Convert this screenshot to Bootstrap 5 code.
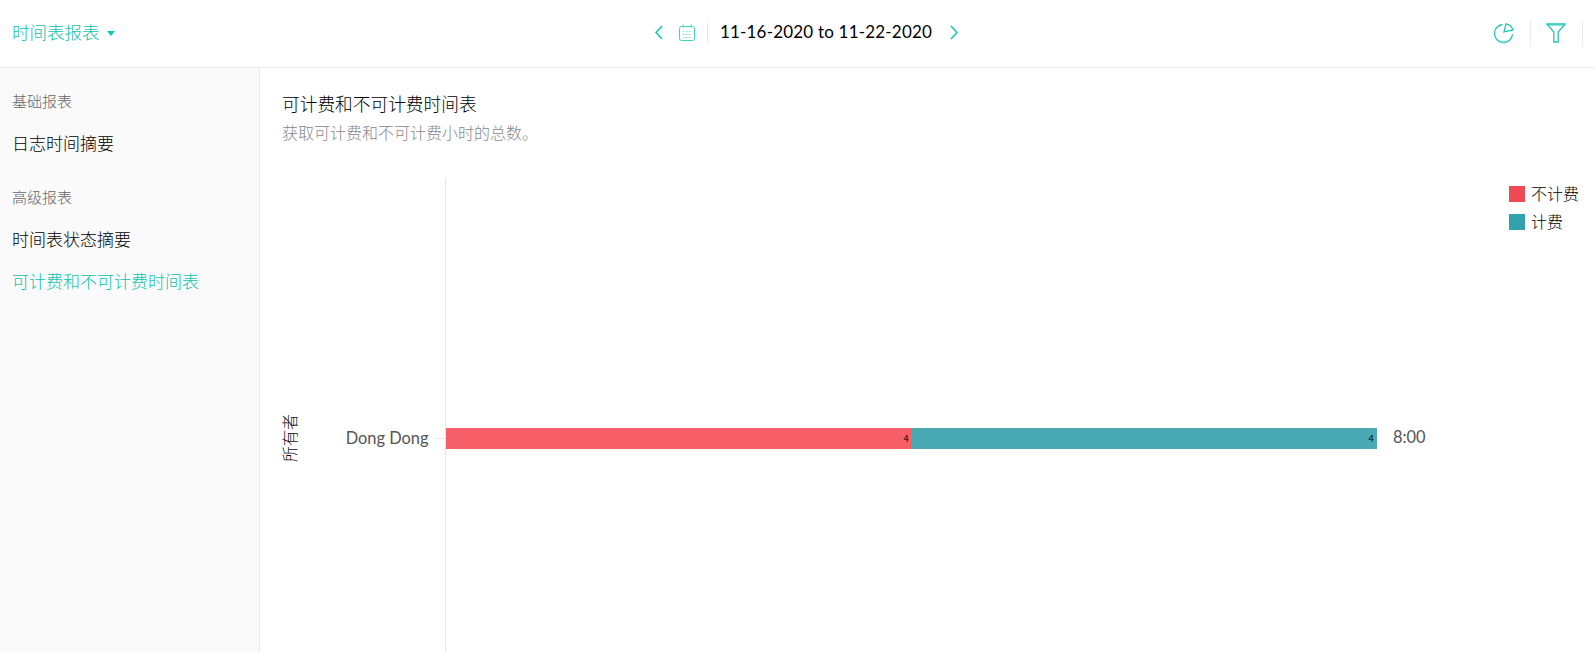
<!DOCTYPE html>
<html lang="zh-CN">

<head>
    <meta charset="UTF-8">
    <meta name="viewport" content="width=device-width, initial-scale=1.0">
    <title>时间表报表</title>
    <link href="https://cdn.jsdelivr.net/npm/bootstrap@5.3.0/dist/css/bootstrap.min.css" rel="stylesheet">
    <style>
        html, body { height: 100%; overflow: hidden; }
        body { font-family: Lato, "Noto Sans CJK SC", sans-serif; font-weight: 300; color: #000; background: #fff; }
        .top-bar { height: 68px; border-bottom: 1px solid #eaeaea; padding: 0 12px 2px; }
        .top-side { width: 300px; }
        .report-title { color: #0cc4ad; font-size: 17.500px; line-height: 20px; margin-right: 7px; }
        .caret-down { width: 0; height: 0; border-left: 4.500px solid transparent; border-right: 4.500px solid transparent; border-top: 5px solid #12c7b0; margin-top: 2px; }
        .date-group { margin-left: 18px; }
        .date-icon { margin: 0 12px 0 16px; }
        .date-range { font-size: 17px; font-weight: 400; line-height: 18px; letter-spacing: .2px; border-left: 1px solid #e8e8e8; padding: 0 18px 2px 12px; height: 20px; }
        .tool-cell { height: 26px; border-right: 1px solid #ececec; }
        .tool-pie { padding-right: 16px; }
        .tool-last { padding: 0 16px 0 15px; }
        .page-body { height: 584px; }
        .side-menu { width: 260px; background: #fafafa; border-right: 1px solid #eaeaea; padding: 23px 12px 0; }
        .menu-head { color: #666; font-size: 15px; line-height: 20px; margin-bottom: 23px; }
        .menu-link { color: #000; font-size: 17px; line-height: 20px; margin-bottom: 22px; }
        .menu-link.on { color: #0cc4ad; }
        .menu-gap { margin-top: 33px; }
        .chart-area { padding: 25px 22px 0; }
        .chart-title { font-size: 17.700px; line-height: 24px; font-weight: 300; color: #000; margin: 0 0 6px; }
        .chart-sub { font-size: 16px; line-height: 20px; color: #888; margin: 0; }
        .chart-box { position: absolute; left: 0; top: 110px; }
        .chart-box text { font-family: Lato, "Noto Sans CJK SC", sans-serif; font-weight: 400; }
        .chart-box .axis-name { font-weight: 300; }
        .legend-box { position: absolute; right: 16px; top: 116px; font-size: 16px; line-height: 20px; color: #000; }
        .legend-row { gap: 6px; }
        .legend-swatch { width: 16px; height: 16px; }
        .swatch-red { background: #f24a55; }
        .swatch-teal { background: #33a2ad; }
    </style>
</head>

<body>
    <div class="top-bar d-flex align-items-center justify-content-between">
        <div class="top-side d-flex align-items-center">
            <span class="report-title">时间表报表</span>
            <span class="caret-down"></span>
        </div>
        <div class="date-group d-flex align-items-center">
            <svg width="8" height="15" viewBox="0 0 8 15" fill="none" stroke="#12c7b0" stroke-width="1.500"><path d="M7 1 1 7.500l6 6.500"/></svg>
            <svg class="date-icon" width="16" height="17" viewBox="0 0 16 17" fill="none" stroke="#3fd2c0"><rect x=".5" y="2.500" width="15" height="14" rx="2"/><path d="M4 .5v3M12 .5v3"/><path stroke-width="1.200" stroke-dasharray="1.400 1.600" d="M4 7.500h9M4 10.500h9M4 13.500h9" opacity=".7"/></svg>
            <div class="date-range">11-16-2020 to 11-22-2020</div>
            <svg width="8" height="15" viewBox="0 0 8 15" fill="none" stroke="#12c7b0" stroke-width="1.500"><path d="M1 1l6 6.500L1 14"/></svg>
        </div>
        <div class="top-side d-flex align-items-center justify-content-end">
            <div class="tool-cell tool-pie d-flex align-items-center">
                <svg width="20" height="20" viewBox="0 0 20 20" fill="none" stroke="#21c9b4" stroke-width="1.300"><path d="M8.500 1.500A9 9 0 1 0 18.500 11"/><path d="M12 .8 10 9l9-2A9 9 0 0 0 12 .8z"/></svg>
            </div>
            <div class="tool-cell tool-last d-flex align-items-center">
                <svg width="20" height="20" viewBox="0 0 20 20" fill="none" stroke="#21c9b4" stroke-width="1.300"><path d="M.8 1h18.400l-7 8v10H7.800V9z"/><path d="M3 2.200h14" opacity=".6"/></svg>
            </div>
        </div>
    </div>

    <div class="page-body d-flex">
        <div class="side-menu flex-shrink-0">
            <div class="menu-head">基础报表</div>
            <div class="menu-link">日志时间摘要</div>
            <div class="menu-head menu-gap">高级报表</div>
            <div class="menu-link">时间表状态摘要</div>
            <div class="menu-link on">可计费和不可计费时间表</div>
        </div>
        <div class="chart-area flex-grow-1 position-relative">
            <h1 class="chart-title">可计费和不可计费时间表</h1>
            <p class="chart-sub">获取可计费和不可计费小时的总数。</p>
            <svg class="chart-box" width="1335" height="474" viewBox="0 0 1335 474">
                <path d="M185.500 0V474" stroke="#e6e6e6"/>
                <path d="M175 260.500H185" stroke="#e6e6e6"/>
                <rect x="186" y="250" width="465" height="21" fill="#f65f68"/>
                <rect x="651" y="250" width="466" height="21" fill="#49aab3"/>
                <text x="646" y="264" font-size="9" fill="#000" text-anchor="middle">4</text>
                <text x="1111" y="264" font-size="9" fill="#000" text-anchor="middle">4</text>
                <text x="168.500" y="266" font-size="16.400" fill="#555" text-anchor="end">Dong Dong</text>
                <text x="1133" y="265" font-size="16.400" fill="#555">8:00</text>
                <text class="axis-name" transform="translate(36 260) rotate(-90)" font-size="16" fill="#111" text-anchor="middle">所有者</text>
            </svg>
            <div class="legend-box d-flex flex-column gap-2">
                <div class="legend-row d-flex align-items-center"><span class="legend-swatch swatch-red"></span><span>不计费</span></div>
                <div class="legend-row d-flex align-items-center"><span class="legend-swatch swatch-teal"></span><span>计费</span></div>
            </div>
        </div>
    </div>

    <script src="https://cdn.jsdelivr.net/npm/bootstrap@5.3.0/dist/js/bootstrap.bundle.min.js"></script>
</body>

</html>
